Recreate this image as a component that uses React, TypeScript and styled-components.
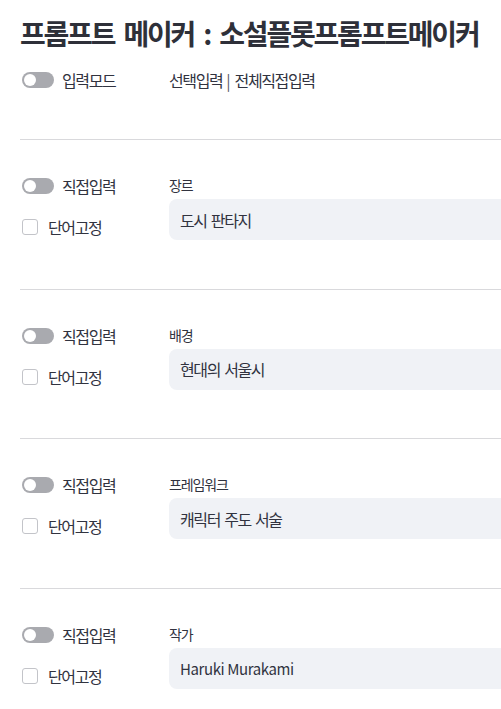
import React from 'react';
import styled, { createGlobalStyle } from 'styled-components';

const GlobalStyle = createGlobalStyle`
  html, body {
    margin: 0;
    padding: 0;
    background: #ffffff;
    overflow: hidden;
  }
  body {
    font-family: "Noto Sans CJK KR", "Noto Sans", sans-serif;
    color: #31333f;
  }
`;

const Page = styled.main`
  width: 900px;
  padding: 18px 0 0 20px;
  box-sizing: border-box;
`;

const Title = styled.h1`
  margin: 0;
  font-size: 28px;
  line-height: 30px;
  font-weight: 700;
  letter-spacing: -2.2px;
  word-spacing: 5px;
  color: #2e3039;
  white-space: nowrap;
`;

const ModeRow = styled.div`
  display: grid;
  grid-template-columns: 149px 1fr;
  align-items: center;
  height: 24px;
  margin-top: 20px;
  margin-bottom: 47px;
`;

const Divider = styled.hr`
  margin: 0;
  border: none;
  height: 1px;
  background: #d9d9dc;
`;

const Section = styled.section`
  display: grid;
  grid-template-columns: 149px 1fr;
  padding: 34px 0 48.5px;
`;

const Controls = styled.div`
  display: flex;
  flex-direction: column;
  gap: 17px;
`;

const ControlRow = styled.label<{ $gap: number }>`
  display: flex;
  align-items: center;
  height: 24px;
  padding-left: 2px;
  gap: ${(p) => p.$gap}px;
`;

const Text = styled.span`
  font-size: 16px;
  letter-spacing: -1.4px;
  word-spacing: 1px;
  white-space: pre;
`;

const Pipe = styled.span`
  letter-spacing: 0;
  margin: 0 4px;
  color: #55575f;
`;

const Track = styled.span`
  position: relative;
  display: inline-block;
  width: 32px;
  height: 16px;
  border-radius: 8px;
  background: #a9aaaf;
  flex-shrink: 0;

  &::after {
    content: '';
    position: absolute;
    left: 2px;
    top: 2px;
    width: 12px;
    height: 12px;
    border-radius: 50%;
    background: #ffffff;
  }
`;

const Box = styled.span`
  display: inline-block;
  width: 16px;
  height: 16px;
  box-sizing: border-box;
  border: 1px solid #c3c4c9;
  border-radius: 3px;
  background: #ffffff;
  flex-shrink: 0;
`;

const Field = styled.div`
  display: flex;
  flex-direction: column;
  width: 600px;
`;

const FieldLabel = styled.div`
  height: 22px;
  line-height: 22px;
  font-size: 14px;
  letter-spacing: -1.1px;
  margin-bottom: 3px;
`;

const Input = styled.div<{ $latin?: boolean }>`
  height: 41px;
  box-sizing: border-box;
  display: flex;
  align-items: center;
  padding-left: 11px;
  border-radius: 8px;
  background: #f0f2f6;
  font-size: ${(p) => (p.$latin ? '15px' : '16px')};
  letter-spacing: ${(p) => (p.$latin ? '-0.4px' : '-1.4px')};
  word-spacing: ${(p) => (p.$latin ? '0' : '2px')};
  white-space: pre;
  color: #31333f;
`;

const fields = [
  { label: '장르', value: '도시 판타지' },
  { label: '배경', value: '현대의 서울시' },
  { label: '프레임워크', value: '캐릭터 주도 서술' },
  { label: '작가', value: 'Haruki Murakami', latin: true },
];

const Toggle = ({ label }: { label: string }) => (
  <ControlRow $gap={8}>
    <Track />
    <Text>{label}</Text>
  </ControlRow>
);

const App = () => {
  return (
    <>
      <GlobalStyle />
      <Page>
        <Title>프롬프트 메이커 : 소설플롯프롬프트메이커</Title>
        <ModeRow>
          <Toggle label="입력모드" />
          <Text>
            선택입력<Pipe>|</Pipe>전체직접입력
          </Text>
        </ModeRow>
        {fields.map((f) => (
          <React.Fragment key={f.label}>
            <Divider />
            <Section>
              <Controls>
                <Toggle label="직접입력" />
                <ControlRow $gap={10}>
                  <Box />
                  <Text>단어고정</Text>
                </ControlRow>
              </Controls>
              <Field>
                <FieldLabel>{f.label}</FieldLabel>
                <Input $latin={f.latin}>{f.value}</Input>
              </Field>
            </Section>
          </React.Fragment>
        ))}
      </Page>
    </>
  );
};

export default App;
